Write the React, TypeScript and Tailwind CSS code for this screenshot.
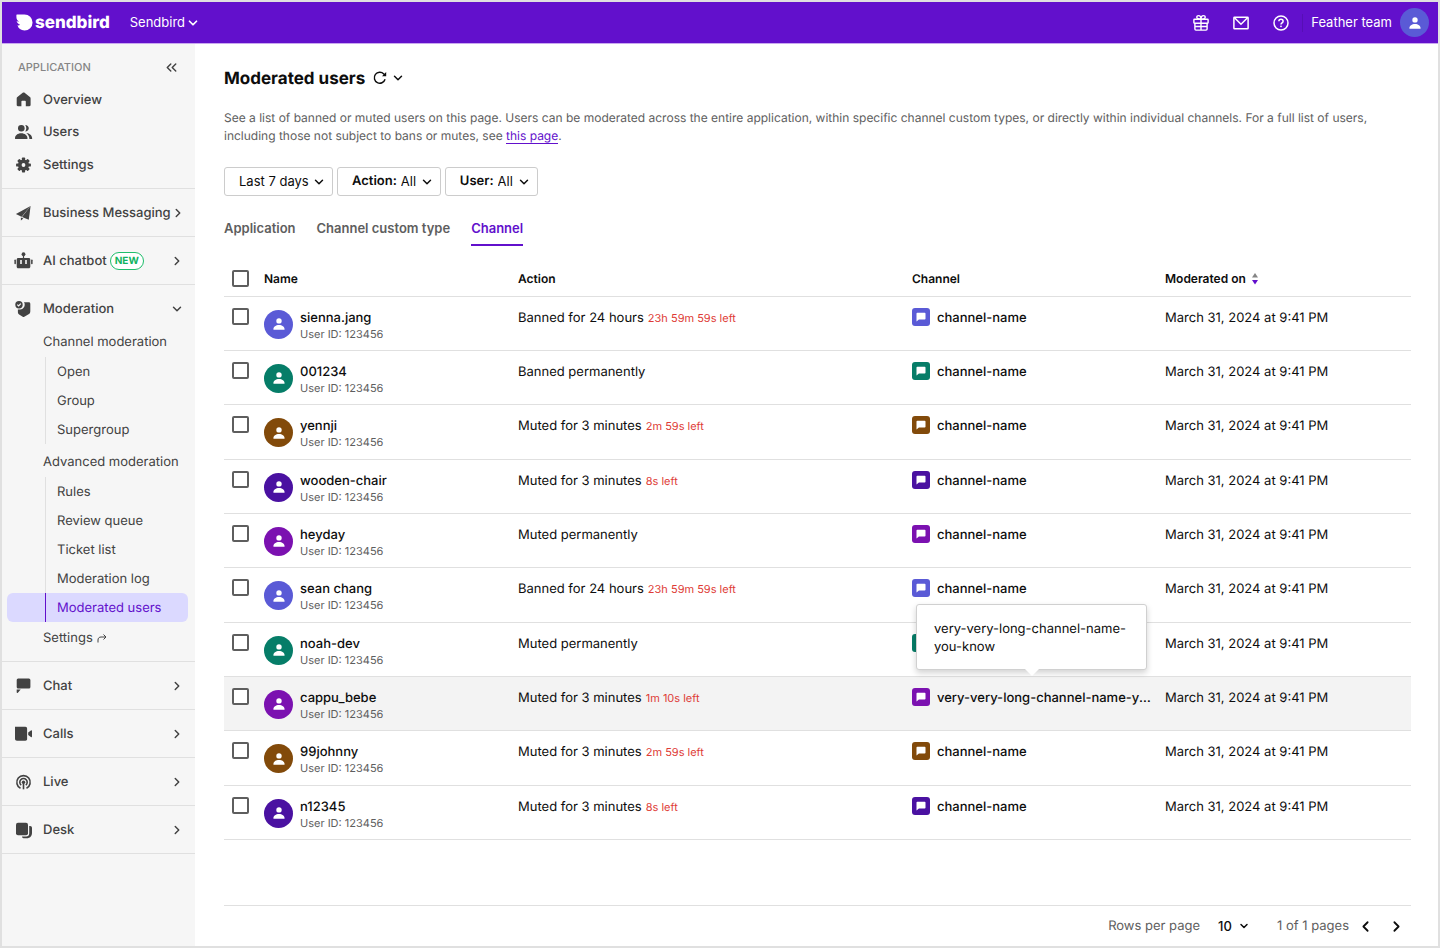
import type { ReactNode } from "react";
import { ChevronDown, ChevronLeft, ChevronRight, ChevronsLeft } from "lucide-react";

type IconProps = { children: ReactNode };

function NavIcon({ children }: IconProps) {
  return (
    <svg viewBox="0 0 20 20" className="size-5 shrink-0" fill="currentColor" aria-hidden="true">
      {children}
    </svg>
  );
}

const icons = {
  home: (
    <NavIcon>
      <path d="M9.400 2.900 4.400 7c-.5.4-.7.8-.7 1.400V15c0 .7.5 1.200 1.200 1.200h3.500v-4.600c0-.5.3-.8.8-.8h2.800c.5 0 .8.3.8.8v4.600h3.600c.7 0 1.200-.5 1.200-1.200V8.400c0-.6-.2-1-.7-1.400l-5-4.100c-.8-.6-1.700-.6-2.500 0z" />
    </NavIcon>
  ),
  users: (
    <NavIcon>
      <circle cx="8.3" cy="6.2" r="3.3" />
      <path d="M2 16.4c0-3 2.6-5.2 6.2-5.2s6.3 2.2 6.3 5.2c0 .4-.2.6-.6.6H2.6c-.4 0-.6-.2-.6-.6z" />
      <path d="M12.200 3c2 0 3.600 1.400 3.600 3.200s-1.600 3.300-3.600 3.300c.7-.9 1.100-2 1.100-3.200S12.900 3.900 12.200 3z" />
      <path d="M13.300 10.900c3.500.3 5.900 2.700 5.900 5.500 0 .4-.2.6-.6.6h-2.200c0-2.500-1-4.600-3.100-6.100z" />
    </NavIcon>
  ),
  gear: (
    <NavIcon>
      <path
        fillRule="evenodd"
        d="M10.500 4.500a5.500 5.500 0 1 0 0 11 5.500 5.500 0 0 0 0-11zm0 3.600a1.900 1.900 0 1 1 0 3.800 1.900 1.900 0 0 1 0-3.800z"
      />
      {[0, 45, 90, 135, 180, 225, 270, 315].map((a) => (
        <rect key={a} x="8.900" y="2.600" width="3.200" height="3.200" rx="0.700" transform={`rotate(${a} 10.5 10)`} />
      ))}
    </NavIcon>
  ),
  plane: (
    <NavIcon>
      <path d="M17.600 2.900 2.900 11.100l4.600 2.100z" />
      <path d="M17.600 2.900 9 13.900l6.800 2.800z" />
      <path d="M7.900 14.400l2.500 1L7.900 17.400z" />
      <path d="M17.600 2.900 7 13l1.700.7z" />
    </NavIcon>
  ),
  robot: (
    <NavIcon>
      <circle cx="10.500" cy="3.200" r="1.900" />
      <path d="M9.900 4h1.200v4H9.900z" />
      <path
        fillRule="evenodd"
        d="M5.200 7h10.600c.9 0 1.500.6 1.500 1.500v7.300c0 .9-.6 1.500-1.500 1.500H5.200c-.9 0-1.500-.6-1.500-1.500V8.500C3.700 7.600 4.300 7 5.200 7zm2 2v3.900h1.600V9zm5 0v3.900h1.600V9z"
      />
      <rect x="1.400" y="8.600" width="1.500" height="4.600" rx="0.700" />
      <rect x="18.100" y="8.600" width="1.500" height="4.600" rx="0.700" />
    </NavIcon>
  ),
  shield: (
    <NavIcon>
      <path d="M10.900 3.300h4.900c.9 0 1.500.6 1.500 1.500v7.400c0 1.600-.6 2.400-1.700 3.100l-4.300 2.400c-.5.3-1.100.3-1.600 0l-3.200-1.900c-1-.6-1.600-1.400-1.600-2.600v-2.700c3.600.6 6.800-1.400 6.800-5.100 0-.8-.2-1.500-.8-2.100z" />
      <circle cx="6" cy="5.700" r="3.700" />
      <path d="m4.300 5.700 1.300 1.300 2.200-2.400" fill="none" stroke="#f6f6f6" strokeWidth="1.200" />
    </NavIcon>
  ),
  chat: (
    <NavIcon>
      <rect x="3.700" y="2.500" width="13.700" height="10" rx="1.500" />
      <path d="M3.700 13.500h4l-2.800 3.200c-.5.5-1.200.3-1.200-.4z" />
    </NavIcon>
  ),
  calls: (
    <NavIcon>
      <path d="M2 2.800h10.400c1 0 1.700.7 1.700 1.700V15c0 1-.7 1.700-1.700 1.700H4c-1.200 0-2-.8-2-2z" />
      <path d="m15.200 8.500 2.700-2c.5-.4 1.100-.1 1.100.5v5.500c0 .6-.6.9-1.100.5l-2.700-2z" />
    </NavIcon>
  ),
  live: (
    <NavIcon>
      <g fill="none" stroke="currentColor" strokeWidth="1.600">
        <path d="M7.500 16.300a6.700 6.700 0 1 1 6 0" />
        <path d="M8.200 13.100a3.700 3.700 0 1 1 4.600 0" />
      </g>
      <circle cx="10.500" cy="10.200" r="1.700" />
      <path d="M9.700 10.300h1.600v7H9.700z" />
    </NavIcon>
  ),
  desk: (
    <NavIcon>
      <rect x="3" y="2.800" width="12" height="12.500" rx="2" />
      <path d="M16.200 6h1c1.100 0 1.800.8 1.800 1.900v4.800c0 3.300-2 5.500-5.200 5.500h-3.200c-.9 0-1.500-.7-1.600-1.700h4.200c1.900 0 3-1.100 3-3z" />
    </NavIcon>
  ),
};

function Person({ className }: { className: string }) {
  return (
    <span className={`flex shrink-0 items-center justify-center rounded-full text-white ${className}`}>
      <svg viewBox="0 0 12 12" className="size-3" fill="currentColor" aria-hidden="true">
        <circle cx="6" cy="2.900" r="2.700" />
        <path d="M.4 11.200C.4 8.500 2.900 6.900 6 6.900s5.600 1.600 5.600 4.300c0 .4-.2.600-.6.600H1c-.4 0-.6-.2-.6-.6z" />
      </svg>
    </span>
  );
}

type Row = {
  name: string;
  action: string;
  left?: string;
  color: string;
  channel: string;
  highlighted?: boolean;
};

const rows: Row[] = [
  { name: "sienna.jang", action: "Banned for 24 hours", left: "23h 59m 59s left", color: "bg-[#5a5ad6]", channel: "channel-name" },
  { name: "001234", action: "Banned permanently", color: "bg-[#067d68]", channel: "channel-name" },
  { name: "yennji", action: "Muted for 3 minutes", left: "2m 59s left", color: "bg-[#824a0a]", channel: "channel-name" },
  { name: "wooden-chair", action: "Muted for 3 minutes", left: "8s left", color: "bg-[#4a11a1]", channel: "channel-name" },
  { name: "heyday", action: "Muted permanently", color: "bg-[#7b11b0]", channel: "channel-name" },
  { name: "sean chang", action: "Banned for 24 hours", left: "23h 59m 59s left", color: "bg-[#5a5ad6]", channel: "channel-name" },
  { name: "noah-dev", action: "Muted permanently", color: "bg-[#067d68]", channel: "channel-name" },
  { name: "cappu_bebe", action: "Muted for 3 minutes", left: "1m 10s left", color: "bg-[#7b11b0]", channel: "very-very-long-channel-name-you-know", highlighted: true },
  { name: "99johnny", action: "Muted for 3 minutes", left: "2m 59s left", color: "bg-[#824a0a]", channel: "channel-name" },
  { name: "n12345", action: "Muted for 3 minutes", left: "8s left", color: "bg-[#4a11a1]", channel: "channel-name" },
];

function NavSection({ icon, label, badge }: { icon: ReactNode; label: string; badge?: string }) {
  return (
    <a href="#" className="flex h-12 items-center border-b border-[#e0e0e0] pr-[11px] pl-[11px] font-medium">
      {icon}
      <span className="ml-[10px] pt-[2px] whitespace-nowrap">{label}</span>
      {badge && (
        <span className="ml-[3px] rounded-full border border-[#1fbd6b] bg-white px-1 text-[10px] leading-4 font-bold text-[#12b35f]">
          {badge}
        </span>
      )}
      <ChevronRight size={14} strokeWidth={2.5} className="ml-auto shrink-0" />
    </a>
  );
}

function SubList({ items, active }: { items: string[]; active?: string }) {
  return (
    <ul className="pr-[7px] pl-[5px]">
      {items.map((item) => {
        const on = item === active;
        return (
          <li key={item} className={on ? "rounded-md bg-[#dbd9ff] pl-[38px] text-[#6210cc]" : "pl-[38px]"}>
            <a
              href="#"
              aria-current={on ? "page" : undefined}
              className={`block h-[29px] border-l pl-[11px] leading-[31px] ${on ? "border-[#6210cc]" : "border-[#e0e0e0]"}`}
            >
              {item}
            </a>
          </li>
        );
      })}
    </ul>
  );
}

function Filter({ id, label, value }: { id: string; label?: string; value: string }) {
  return (
    <div className="relative flex h-[29px] items-center rounded-[3px] border border-[#cccccc] pl-[14px]">
      {label && (
        <label htmlFor={id} className="mr-1 pt-[1px] font-semibold">
          {label}
        </label>
      )}
      <select id={id} aria-label={label ? undefined : "Period"} className="appearance-none bg-transparent pr-[23px] outline-none">
        <option>{value}</option>
      </select>
      <ChevronDown size={14} strokeWidth={2.5} className="pointer-events-none absolute right-[6px]" />
    </div>
  );
}

function Checkbox({ label }: { label: string }) {
  return (
    <input
      type="checkbox"
      aria-label={label}
      className="ml-2 block size-[17px] appearance-none rounded-[2px] border-2 border-[#5e5e5e] bg-white checked:bg-[#6210cc]"
    />
  );
}

function Tooltip({ text }: { text: string }) {
  return (
    <div
      role="tooltip"
      className="absolute bottom-full left-1 mb-[17px] w-[231px] rounded-[3px] border border-[#d0d0d0] bg-white pt-[15px] pr-4 pb-[13px] pl-[17px] text-[13px] leading-[18px] font-normal whitespace-normal shadow-[0_3px_6px_rgba(0,0,0,0.18)]"
    >
      {text}
      <svg viewBox="0 0 14 8" className="absolute top-full left-[108px] h-2 w-[14px]" aria-hidden="true">
        <path d="M0 0h14L7 7z" fill="#fff" />
      </svg>
    </div>
  );
}

function Header() {
  return (
    <header className="flex h-[42px] items-center border-b border-[#c9a8f0] bg-[#6210cc] pr-[9px] pl-[14px] text-white">
      <a href="#" className="flex items-center" aria-label="sendbird">
        <svg viewBox="0 0 17 17" className="size-[17px]" fill="currentColor" aria-hidden="true">
          <path d="M.4.900C.4.600.6.400.9.400h7.600a8 8 0 0 1 0 16.100c-3.600 0-6.200-2-7-5.200 1.100.2 2 0 2.700-.5C2.500 10.100.9 8.900.6 7c.9.5 1.700.6 2.500.5C1.400 6.600.4 4.800.4 2.900z" />
        </svg>
        <span className="ml-[2px] text-[17px] leading-5 font-extrabold">sendbird</span>
      </a>
      <button type="button" className="ml-5 flex items-center gap-[1px]">
        Sendbird
        <ChevronDown size={14} strokeWidth={3} />
      </button>
      <div className="ml-auto flex items-center">
        <button type="button" aria-label="What's new">
          <svg viewBox="0 0 18 18" className="size-[18px]" fill="none" stroke="currentColor" strokeWidth="1.400" aria-hidden="true">
            <rect x="1.900" y="5.200" width="14.200" height="4" rx="0.600" />
            <path d="M2.900 9.200V15c0 .7.4 1.100 1.100 1.100h10c.7 0 1.100-.4 1.100-1.100V9.200M9 5.200v10.900M2.900 12.500h12.200" />
            <path d="M9 5.200C5.900 5.200 4.800 4.500 4.800 3.300c0-1 .7-1.700 1.700-1.700C8 1.600 9 3 9 5.200zM9 5.200c3.100 0 4.200-.7 4.200-1.900 0-1-.7-1.700-1.700-1.700C10 1.600 9 3 9 5.200z" />
          </svg>
        </button>
        <button type="button" aria-label="Messages" className="ml-[22px]">
          <svg viewBox="0 0 18 18" className="size-[18px]" fill="none" stroke="currentColor" strokeWidth="1.500" aria-hidden="true">
            <rect x="1.900" y="3.200" width="14.200" height="11.600" rx="0.600" />
            <path d="m2.500 3.800 6.500 6.400 6.500-6.400" />
          </svg>
        </button>
        <button type="button" aria-label="Help" className="ml-[22px]">
          <svg viewBox="0 0 18 18" className="size-[18px]" fill="none" stroke="currentColor" strokeWidth="1.500" aria-hidden="true">
            <circle cx="9" cy="9" r="7" />
            <path d="M6.900 7.300c0-1.200.9-2 2.100-2s2.100.8 2.100 1.900c0 1.600-2.100 1.600-2.100 3.200" />
            <circle cx="9" cy="12.300" r="0.900" fill="currentColor" stroke="none" />
          </svg>
        </button>
        <span className="ml-3 h-[18px] w-px bg-[#560fb5]" />
        <button type="button" className="ml-2 flex items-center gap-2">
          Feather team
          <Person className="size-[29px] bg-[#5a5ad6]" />
        </button>
      </div>
    </header>
  );
}

function Sidebar() {
  return (
    <nav aria-label="Application" className="w-[193px] shrink-0 bg-[#f6f6f6] text-[#424242]">
      <div className="flex items-center justify-between pt-[13px] pr-[15px] pl-4 leading-5">
        <span className="text-[11px] font-medium text-[#858585]">APPLICATION</span>
        <button type="button" aria-label="Collapse menu">
          <ChevronsLeft size={17} strokeWidth={2} />
        </button>
      </div>
      <div className="border-b border-[#e0e0e0] pt-[6px] pb-[7px] font-medium">
        <a href="#" className="flex h-[33px] items-center gap-[10px] pl-[11px]">
          {icons.home}
          <span className="pt-[2px]">Overview</span>
        </a>
        <a href="#" className="flex h-8 items-center gap-[10px] pl-[11px]">
          {icons.users}
          <span className="pt-[2px]">Users</span>
        </a>
        <a href="#" className="flex h-[33px] items-center gap-[10px] pl-[11px]">
          {icons.gear}
          <span className="pt-[2px]">Settings</span>
        </a>
      </div>
      <NavSection icon={icons.plane} label="Business Messaging" />
      <NavSection icon={icons.robot} label="AI chatbot" badge="NEW" />
      <div className="border-b border-[#e0e0e0] pb-2">
        <a href="#" aria-expanded="true" className="flex h-[47px] items-center pr-[11px] pl-[11px] font-medium">
          {icons.shield}
          <span className="ml-[10px] pt-[2px]">Moderation</span>
          <ChevronDown size={14} strokeWidth={2.5} className="ml-auto" />
        </a>
        <div className="h-[25px] pl-[41px] leading-5">Channel moderation</div>
        <SubList items={["Open", "Group", "Supergroup"]} />
        <div className="h-[33px] pt-2 pl-[41px] leading-5">Advanced moderation</div>
        <SubList
          items={["Rules", "Review queue", "Ticket list", "Moderation log", "Moderated users"]}
          active="Moderated users"
        />
        <a href="#" className="flex h-[31px] items-center gap-1 pt-[2px] pl-[41px]">
          Settings
          <svg viewBox="0 0 10 10" className="size-[10px]" fill="none" stroke="currentColor" aria-hidden="true">
            <path d="M1 8.500V6C1 4.200 2.200 3 4 3h5M6.500.500 9 3 6.500 5.500" />
          </svg>
        </a>
      </div>
      <NavSection icon={icons.chat} label="Chat" />
      <NavSection icon={icons.calls} label="Calls" />
      <NavSection icon={icons.live} label="Live" />
      <NavSection icon={icons.desk} label="Desk" />
    </nav>
  );
}

function UsersTable() {
  return (
    <table className="mt-4 h-[578px] w-full table-fixed border-collapse text-left">
      <thead>
        <tr className="h-[34px] border-b border-[#e0e0e0] text-[12px]">
          <th className="w-10 p-0"><Checkbox label="Select all users" /></th>
          <th className="w-[254px] p-0 font-semibold">Name</th>
          <th className="p-0 font-semibold">Action</th>
          <th className="w-[253px] p-0 font-semibold">Channel</th>
          <th className="w-[246px] p-0 font-semibold">
            <button type="button" className="flex items-center gap-[5px] font-semibold">
              Moderated on
              <svg viewBox="0 0 8 12" className="h-3 w-2" aria-hidden="true">
                <path d="M4 0 7 4.500H1z" fill="#858585" />
                <path d="M1 7h6L4 11.500z" fill="#6210cc" />
              </svg>
            </button>
          </th>
        </tr>
      </thead>
      <tbody className="leading-[18px]">
        {rows.map((row) => (
          <tr key={row.name} className={`border-b border-[#e0e0e0] align-top ${row.highlighted ? "bg-[#f3f3f3]" : ""}`}>
            <td className="px-0 pt-[11px]"><Checkbox label={`Select ${row.name}`} /></td>
            <td className="px-0 pt-3">
              <div className="flex items-start">
                <Person className={`mt-[1px] size-[29px] ${row.color}`} />
                <div className="ml-[7px]">
                  <div className="leading-[18px] font-medium">{row.name}</div>
                  <div className="text-[11px] leading-[14px] text-[#5e5e5e]">User ID: 123456</div>
                </div>
              </div>
            </td>
            <td className="px-0 pt-3 whitespace-nowrap">
              {row.action}
              {row.left && <span className="ml-1 text-[11px] text-[#de3b36]">{row.left}</span>}
            </td>
            <td className="px-0 pt-[10px]">
              <div className="relative flex items-center pr-[14px]">
                <span className={`mr-[7px] flex size-[18px] shrink-0 items-center justify-center rounded-[3px] text-white ${row.color}`}>
                  <svg viewBox="0 0 10 10" className="size-[10px]" fill="currentColor" aria-hidden="true">
                    <path d="M1.300.8h7.400c.5 0 .8.300.8.800v5.200c0 .5-.3.800-.8.800H2.900L.5 9.500V1.600c0-.5.3-.8.8-.8z" />
                  </svg>
                </span>
                <a href="#" className="truncate pt-[2px] font-medium">{row.channel}</a>
                {row.highlighted && <Tooltip text={row.channel} />}
              </div>
            </td>
            <td className="px-0 pt-3 whitespace-nowrap">March 31, 2024 at 9:41 PM</td>
          </tr>
        ))}
      </tbody>
    </table>
  );
}

export default function App() {
  return (
    <div className="flex min-h-screen flex-col border-2 border-[#e0e0e0] bg-white font-['Inter','Liberation_Sans',sans-serif] text-[13px] text-[#0d0d0d] [text-rendering:geometricPrecision]">
      <Header />
      <div className="flex flex-1">
        <Sidebar />
        <main className="flex min-w-0 flex-1 flex-col pr-[27px] pl-[29px]">
          <div className="mt-[22px] flex h-6 items-center">
            <h1 className="pt-[2px] text-[17px] leading-6 font-bold">Moderated users</h1>
            <button type="button" aria-label="Refresh" className="ml-2 flex items-center gap-1">
              <svg viewBox="0 0 14 14" className="size-[14px]" fill="none" stroke="currentColor" strokeWidth="1.400" aria-hidden="true">
                <path d="M12.100 8.300A5.500 5.500 0 1 1 10.800 2.900l1.200 1.200" />
                <path d="M13.200 1v4.200H9z" fill="currentColor" stroke="none" />
              </svg>
              <ChevronDown size={14} strokeWidth={2.5} />
            </button>
          </div>
          <p className="mt-[19px] text-[12px] leading-[18px] text-[#5e5e5e]">
            See a list of banned or muted users on this page. Users can be moderated across the entire application, within
            specific channel custom types, or directly within individual channels. For a full list of users, including those
            not subject to bans or mutes, see{" "}
            <a href="#" className="border-b border-[#6210cc] text-[#6210cc]">this page</a>.
          </p>
          <div className="mt-[22px] flex gap-1">
            <Filter id="period" value="Last 7 days" />
            <Filter id="action" label="Action:" value="All" />
            <Filter id="user" label="User:" value="All" />
          </div>
          <div role="tablist" className="mt-[23px] flex gap-[21px] font-semibold text-[#5e5e5e]">
            <button type="button" role="tab" className="h-[27px] pb-[7px] font-semibold">Application</button>
            <button type="button" role="tab" className="h-[27px] pb-[7px] font-semibold">Channel custom type</button>
            <button type="button" role="tab" aria-selected="true" className="h-[27px] border-b-2 border-[#6210cc] pb-[5px] font-semibold text-[#6210cc]">
              Channel
            </button>
          </div>
          <UsersTable />
          <footer className="mt-auto flex h-[41px] items-center justify-end border-t border-[#e0e0e0] text-[#5e5e5e]">
            <label htmlFor="page-size" className="pt-[2px]">Rows per page</label>
            <div className="relative ml-[18px] flex items-center text-[#0d0d0d]">
              <select id="page-size" className="appearance-none bg-transparent pt-[2px] pr-[14px] font-medium outline-none">
                <option>10</option>
              </select>
              <ChevronDown size={12} strokeWidth={3} className="pointer-events-none absolute -right-[4px]" />
            </div>
            <span className="ml-[31px] pt-[2px]">1 of 1 pages</span>
            <button type="button" aria-label="Previous page" className="ml-2 text-[#0d0d0d]">
              <ChevronLeft size={17} strokeWidth={2.5} />
            </button>
            <button type="button" aria-label="Next page" className="mr-[6px] ml-[14px] text-[#0d0d0d]">
              <ChevronRight size={17} strokeWidth={2.5} />
            </button>
          </footer>
        </main>
      </div>
    </div>
  );
}
